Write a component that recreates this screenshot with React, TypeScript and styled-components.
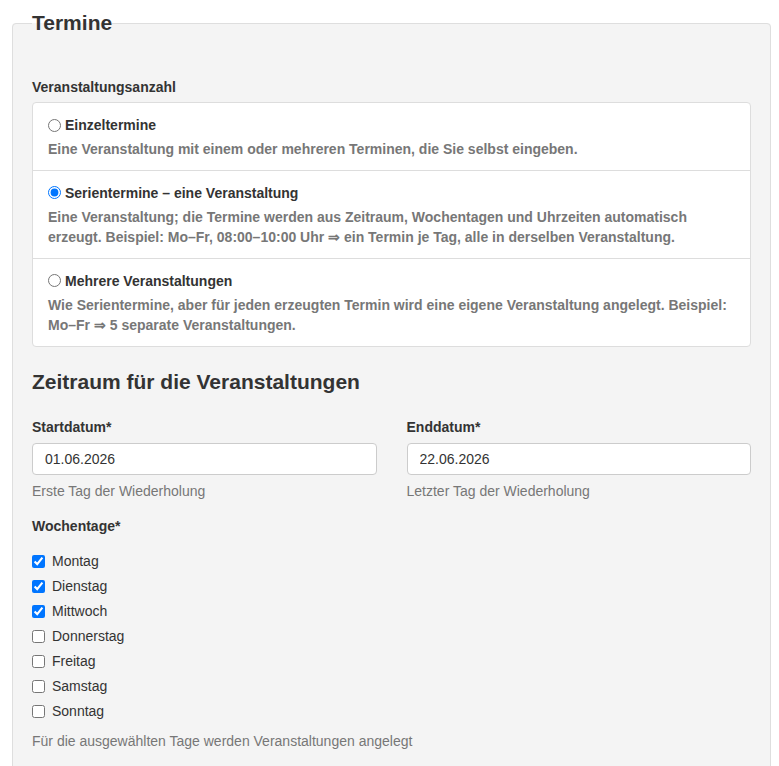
import styled, { createGlobalStyle } from 'styled-components';

const GlobalStyle = createGlobalStyle`
  body {
    margin: 0;
    background: #fff;
    font-family: "Liberation Sans", Helvetica, Arial, sans-serif;
    color: #333;
  }
`;

const Page = styled.div`
  padding: 11px 8px 40px 12px;
`;

const Fieldset = styled.fieldset`
  margin: 0;
  border: 1px solid #dedede;
  border-radius: 4px;
  background: #f4f4f4;
  padding: 0 19px 24px 19px;
  min-width: 0;
`;

const Legend = styled.legend`
  padding: 0;
  font-size: 21px;
  line-height: 24px;
  font-weight: bold;
  color: #333;
`;

const GroupLabel = styled.div<{ $top?: number }>`
  margin-top: ${(p) => p.$top ?? 0}px;
  font-size: 14px;
  line-height: 20px;
  font-weight: bold;
  color: #333;
`;

const OptionList = styled.div`
  margin-top: 5px;
  background: #fff;
  border: 1px solid #ddd;
  border-radius: 4px;
`;

const Option = styled.label`
  display: block;
  padding: 12px 15px 10px;
  cursor: pointer;

  & + & {
    border-top: 1px solid #ddd;
  }
`;

const OptionTitle = styled.div`
  display: flex;
  align-items: center;
  font-size: 14px;
  line-height: 20px;
  font-weight: bold;
  color: #333;

  input {
    margin: 0 4px 0 0;
    width: 13px;
    height: 13px;
  }
`;

const OptionText = styled.div`
  margin-top: 4px;
  font-size: 14px;
  line-height: 20.5px;
  font-weight: bold;
  color: #777;
`;

const SectionTitle = styled.h2`
  margin: 23px 0 0;
  font-size: 21px;
  line-height: 24px;
  font-weight: bold;
  color: #333;
`;

const DateRow = styled.div`
  display: grid;
  grid-template-columns: 1fr 1fr;
  column-gap: 30px;
  margin-top: 23px;
`;

const Field = styled.div`
  display: flex;
  flex-direction: column;
`;

const DateInput = styled.input`
  box-sizing: border-box;
  margin-top: 6px;
  height: 32px;
  width: 100%;
  padding: 0 12px;
  border: 1px solid #ccc;
  border-radius: 4px;
  background: #fff;
  font-family: inherit;
  font-size: 14px;
  color: #333;
`;

const Hint = styled.div<{ $top?: number }>`
  margin-top: ${(p) => p.$top ?? 6}px;
  font-size: 14px;
  line-height: 20px;
  color: #777;
`;

const DayList = styled.div`
  margin-top: 13px;
  display: flex;
  flex-direction: column;
`;

const Day = styled.label`
  display: flex;
  align-items: center;
  height: 25px;
  font-size: 14px;
  color: #333;

  input {
    margin: 0 7px 0 0;
    width: 13px;
    height: 13px;
  }
`;

const modes = [
  {
    id: 'single',
    title: 'Einzeltermine',
    text: 'Eine Veranstaltung mit einem oder mehreren Terminen, die Sie selbst eingeben.',
  },
  {
    id: 'series',
    title: 'Serientermine – eine Veranstaltung',
    text: 'Eine Veranstaltung; die Termine werden aus Zeitraum, Wochentagen und Uhrzeiten automatisch erzeugt. Beispiel: Mo–Fr, 08:00–10:00 Uhr ⇒ ein Termin je Tag, alle in derselben Veranstaltung.',
  },
  {
    id: 'multi',
    title: 'Mehrere Veranstaltungen',
    text: 'Wie Serientermine, aber für jeden erzeugten Termin wird eine eigene Veranstaltung angelegt. Beispiel: Mo–Fr ⇒ 5 separate Veranstaltungen.',
  },
];

const days = [
  { name: 'Montag', on: true },
  { name: 'Dienstag', on: true },
  { name: 'Mittwoch', on: true },
  { name: 'Donnerstag', on: false },
  { name: 'Freitag', on: false },
  { name: 'Samstag', on: false },
  { name: 'Sonntag', on: false },
];

const App = () => {
  return (
    <Page>
      <GlobalStyle />
      <Fieldset>
        <Legend>Termine</Legend>

        <GroupLabel $top={42}>Veranstaltungsanzahl</GroupLabel>
        <OptionList>
          {modes.map((m) => (
            <Option key={m.id}>
              <OptionTitle>
                <input type="radio" name="mode" defaultChecked={m.id === 'series'} />
                {m.title}
              </OptionTitle>
              <OptionText>{m.text}</OptionText>
            </Option>
          ))}
        </OptionList>

        <SectionTitle>Zeitraum für die Veranstaltungen</SectionTitle>
        <DateRow>
          <Field>
            <GroupLabel>Startdatum*</GroupLabel>
            <DateInput type="text" defaultValue="01.06.2026" />
            <Hint>Erste Tag der Wiederholung</Hint>
          </Field>
          <Field>
            <GroupLabel>Enddatum*</GroupLabel>
            <DateInput type="text" defaultValue="22.06.2026" />
            <Hint>Letzter Tag der Wiederholung</Hint>
          </Field>
        </DateRow>

        <GroupLabel $top={15}>Wochentage*</GroupLabel>
        <DayList>
          {days.map((d) => (
            <Day key={d.name}>
              <input type="checkbox" defaultChecked={d.on} />
              {d.name}
            </Day>
          ))}
        </DayList>
        <Hint $top={7}>Für die ausgewählten Tage werden Veranstaltungen angelegt</Hint>
      </Fieldset>
    </Page>
  );
};

export default App;
